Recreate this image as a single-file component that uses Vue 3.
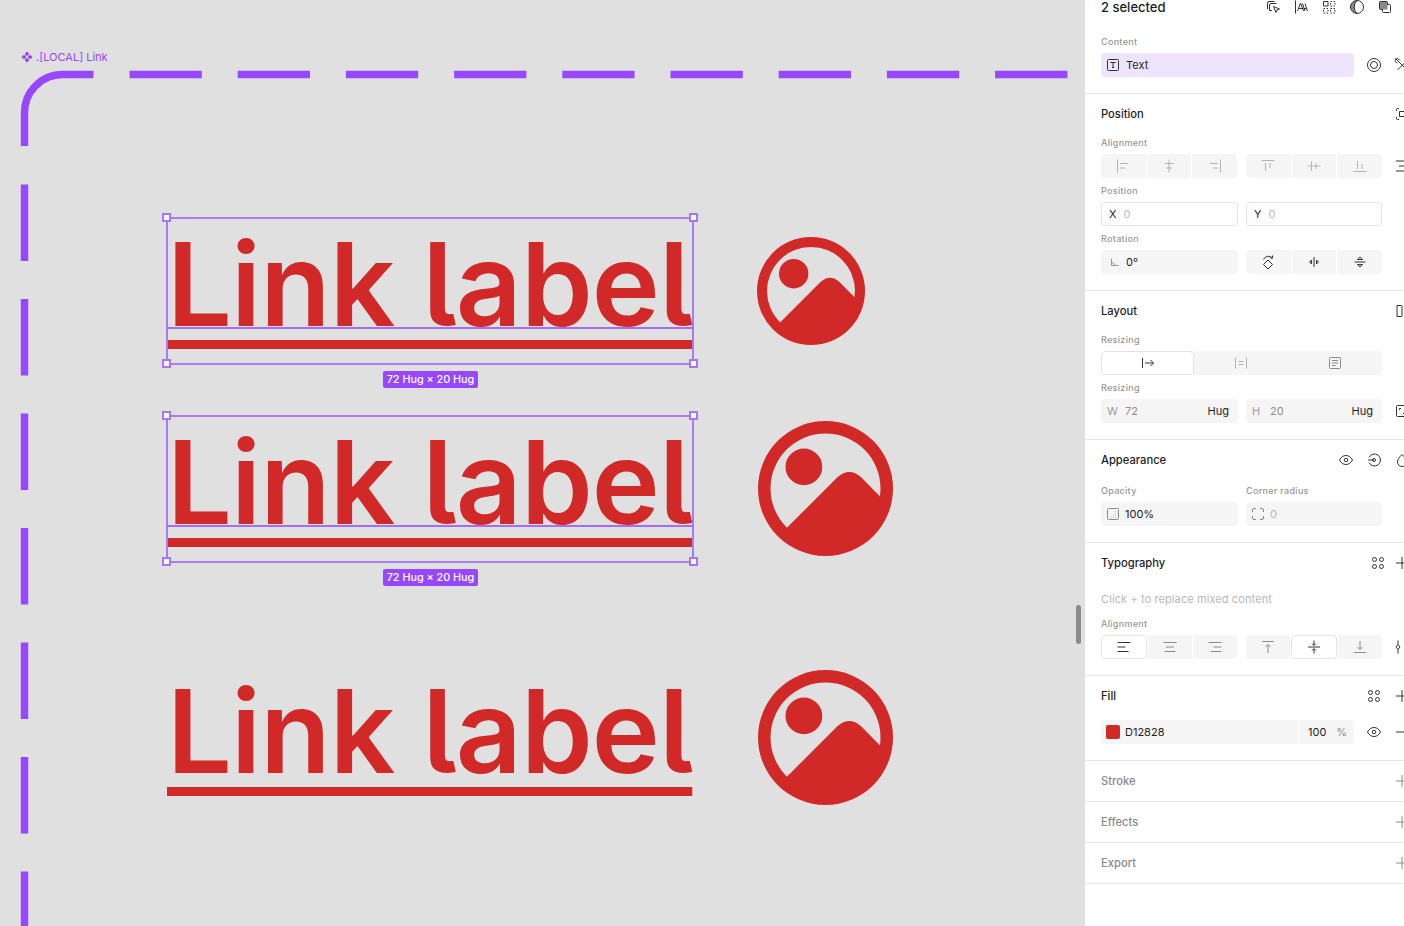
<template>
  <div class="app">
    <div class="canvas">
      <div class="frame-name">
        <svg viewBox="0 0 12 12" class="frame-ic"><path d="M6 .5 8.300 3 6 5.300 3.700 3ZM6 6.700 8.300 9 6 11.500 3.700 9ZM3 3.700 5.300 6 3 8.300.5 6ZM9 3.700 11.500 6 9 8.300 6.700 6Z" /></svg>
        <span>.[LOCAL] Link</span>
      </div>
      <svg class="dashes" viewBox="0 0 1085 926">
        <path class="dash-solid" d="M24.500 146V113a38 38 0 0 1 38-38.500H93.500" />
        <path class="dash-h" d="M129.500 74.500H1068" />
        <path class="dash-v" d="M24.500 184.500V926" />
      </svg>

      <div v-for="item in links" :key="item.cls" class="link" :class="item.cls">
        <span class="link-text">Link label</span>
        <template v-if="item.selected">
          <div class="sel"></div>
          <div class="baseline"></div>
          <i class="handle tl"></i><i class="handle tr"></i><i class="handle bl"></i><i class="handle br"></i>
          <div class="size-tag">72 Hug × 20 Hug</div>
        </template>
      </div>

      <svg v-for="pic in pics" :key="pic" class="pic" :class="pic" viewBox="0 0 108 108">
        <path fill-rule="evenodd" d="M54 0a54 54 0 1 0 0 108A54 54 0 0 0 54 0Zm0 10a44 44 0 1 1 0 88 44 44 0 0 1 0-88Z" />
        <circle cx="36.700" cy="36.700" r="14.700" />
        <path d="M22.500 86 63.500 45Q73 36.500 82.500 45L98 60.700 100 80 60 102 30 96Z" />
      </svg>

      <div class="scroll-thumb"></div>
    </div>

    <aside class="panel">
      <section class="sec">
        <div class="top-row">
          <span class="sel-count">2 selected</span>
          <div class="top-icons">
            <svg viewBox="0 0 16 16" class="ic dark"><path :d="p.pick" /></svg>
            <svg viewBox="0 0 16 16" class="ic dark"><path :d="p.type" /></svg>
            <svg viewBox="0 0 16 16" class="ic dark"><path d="M2.500 2.500h4.500v4.500H2.500Z" /><path class="dotted" d="M9.500 2.500h4.500v4.500H9.500ZM2.500 9.500h4.500v4.500H2.500ZM9.500 9.500h4.500v4.500H9.500Z" /></svg>
            <svg viewBox="0 0 16 16" class="ic dark"><path class="shade" d="M8 1.500a6.500 6.500 0 0 0 0 13A9 9 0 0 1 8 1.500Z" /><path :d="p.contrast" /></svg>
            <svg viewBox="0 0 16 16" class="ic dark"><path class="shade" d="M3.500 2.500h6a1 1 0 0 1 1 1v7h-7a1 1 0 0 1-1-1v-6a1 1 0 0 1 1-1Z" /><path :d="p.stack" /></svg>
            <svg viewBox="0 0 16 16" class="ic dark"><path d="M4 6l4 4 4-4" /></svg>
          </div>
        </div>
        <div class="lab lab-first">Content</div>
        <div class="row wide">
          <div class="field lilac">
            <svg viewBox="0 0 16 16" class="ic dark"><path :d="p.textBox" /></svg>
            <span class="val">Text</span>
          </div>
          <svg viewBox="0 0 16 16" class="ic dark"><path :d="p.target" /></svg>
          <svg viewBox="0 0 16 16" class="ic dark"><path :d="p.unlink" /></svg>
        </div>
      </section>

      <section class="sec">
        <div class="head"><h3>Position</h3><svg viewBox="0 0 16 16" class="ic dark"><path :d="p.frameSel" /></svg></div>
        <div class="lab">Alignment</div>
        <div class="row">
          <div class="seg">
            <span v-for="n in ['alL', 'alC', 'alR']" :key="n"><svg viewBox="0 0 16 16" class="ic off"><path :d="p[n]" /></svg></span>
          </div>
          <div class="seg">
            <span v-for="n in ['alT', 'alM', 'alB']" :key="n"><svg viewBox="0 0 16 16" class="ic off"><path :d="p[n]" /></svg></span>
          </div>
          <svg viewBox="0 0 16 16" class="ic dark trail"><path :d="p.distribute" /></svg>
        </div>
        <div class="lab">Position</div>
        <div class="row">
          <div class="field boxed"><b class="key">X</b><span class="ph">0</span></div>
          <div class="field boxed"><b class="key">Y</b><span class="ph">0</span></div>
        </div>
        <div class="lab">Rotation</div>
        <div class="row">
          <div class="field half">
            <svg viewBox="0 0 16 16" class="ic mid small"><path d="M4 4v8h8M4 8.500a3.500 3.500 0 0 1 3.500 3.500" /></svg>
            <span class="val">0°</span>
          </div>
          <div class="seg">
            <span v-for="n in ['rot', 'flipH', 'flipV']" :key="n"><svg viewBox="0 0 16 16" class="ic dark"><path :d="p[n]" /></svg></span>
          </div>
        </div>
      </section>

      <section class="sec">
        <div class="head"><h3>Layout</h3><svg viewBox="0 0 16 16" class="ic dark"><path :d="p.layout" /></svg></div>
        <div class="lab">Resizing</div>
        <div class="row">
          <div class="seg full">
            <span class="on"><svg viewBox="0 0 16 16" class="ic dark"><path d="M2.500 3v10M5 8h8.500M10.500 5l3 3-3 3" /></svg></span>
            <span><svg viewBox="0 0 16 16" class="ic off"><path d="M2.500 2.500v11M13.500 2.500v11M5.500 6.500h5M5.500 9.500h5" /></svg></span>
            <span><svg viewBox="0 0 16 16" class="ic mid"><path d="M3.500 2.500h9a1 1 0 0 1 1 1v9a1 1 0 0 1-1 1h-9a1 1 0 0 1-1-1v-9a1 1 0 0 1 1-1ZM5 5.500h6M5 8h6M5 10.500h3.500" /></svg></span>
          </div>
        </div>
        <div class="lab">Resizing</div>
        <div class="row">
          <div class="field half"><b class="key dim">W</b><span class="mutedval">72</span><span class="hug">Hug</span></div>
          <div class="field half"><b class="key dim">H</b><span class="mutedval">20</span><span class="hug">Hug</span></div>
          <svg viewBox="0 0 16 16" class="ic dark trail"><path d="M3.500 2.500h9a1 1 0 0 1 1 1v9a1 1 0 0 1-1 1h-9a1 1 0 0 1-1-1v-9a1 1 0 0 1 1-1ZM5.500 7V5.500H7M9 10.500h1.500V9" /></svg>
        </div>
      </section>

      <section class="sec">
        <div class="head">
          <h3>Appearance</h3>
          <div class="head-icons wide-gap">
            <svg viewBox="0 0 16 16" class="ic dark"><path :d="p.eye" /></svg>
            <svg viewBox="0 0 16 16" class="ic dark"><path :d="p.varTarget" /></svg>
            <svg viewBox="0 0 16 16" class="ic dark"><path d="M8 2.500C5.500 5 3.500 7.500 3.500 10a4.500 4.500 0 0 0 9 0C12.500 7.500 10.500 5 8 2.500Z" /></svg>
          </div>
        </div>
        <div class="split-labs">
          <div class="lab">Opacity</div>
          <div class="lab">Corner radius</div>
        </div>
        <div class="row">
          <div class="field half tight">
            <svg viewBox="0 0 16 16" class="ic mid"><path d="M3.500 2.500h9a1 1 0 0 1 1 1v9a1 1 0 0 1-1 1h-9a1 1 0 0 1-1-1v-9a1 1 0 0 1 1-1ZM6 11.500h.5M8 11.500h.5M10 11.500h.5M8 9.500h.5M10 9.500h.5M10 7.500h.5M10 5.500h.5" /></svg>
            <span class="val">100%</span>
          </div>
          <div class="field half tight">
            <svg viewBox="0 0 16 16" class="ic mid"><path d="M2.500 6V4a1.500 1.500 0 0 1 1.500-1.500h2M10 2.500h2A1.500 1.500 0 0 1 13.500 4v2M13.500 10v2a1.500 1.500 0 0 1-1.500 1.500h-2M6 13.500H4A1.500 1.500 0 0 1 2.500 12v-2" /></svg>
            <span class="ph">0</span>
          </div>
        </div>
      </section>

      <section class="sec">
        <div class="head">
          <h3>Typography</h3>
          <div class="head-icons">
            <svg viewBox="0 0 16 16" class="ic dark"><path :d="p.dots" /></svg>
            <svg viewBox="0 0 16 16" class="ic dark"><path :d="p.plus" /></svg>
          </div>
        </div>
        <div class="mixed">Click + to replace mixed content</div>
        <div class="lab lab-tight">Alignment</div>
        <div class="row">
          <div class="seg">
            <span class="on"><svg viewBox="0 0 16 16" class="ic dark"><path d="M1.500 3.500h13M1.500 8h8M1.500 12.500h11" /></svg></span>
            <span><svg viewBox="0 0 16 16" class="ic mid"><path d="M1.500 3.500h13M4 8h8M2.500 12.500h11" /></svg></span>
            <span><svg viewBox="0 0 16 16" class="ic mid"><path d="M1.500 3.500h13M6.500 8h8M3.500 12.500h11" /></svg></span>
          </div>
          <div class="seg">
            <span><svg viewBox="0 0 16 16" class="ic mid"><path d="M2 2.500h12M8 14V5.500M5.500 8 8 5.500 10.500 8" /></svg></span>
            <span class="on"><svg viewBox="0 0 16 16" class="ic dark"><path d="M2 8h12M8 1.500v4.500M6 4.500 8 6.500l2-2M8 14.500V10M6 11.500l2-2 2 2" /></svg></span>
            <span><svg viewBox="0 0 16 16" class="ic mid"><path d="M2 13.500h12M8 2v8.500M5.500 8 8 10.500 10.500 8" /></svg></span>
          </div>
          <svg viewBox="0 0 16 16" class="ic dark trail"><path d="M4 1.500V5.500M4 10.500V14.500M4 5.500 6 8 4 10.500 2 8ZM11 1.500V14.500" /></svg>
        </div>
      </section>

      <section class="sec">
        <div class="head">
          <h3>Fill</h3>
          <div class="head-icons wide-gap">
            <svg viewBox="0 0 16 16" class="ic dark"><path :d="p.dots" /></svg>
            <svg viewBox="0 0 16 16" class="ic dark"><path :d="p.plus" /></svg>
          </div>
        </div>
        <div class="row wide fill-row">
          <div class="fill-field">
            <div class="fill-hex"><i class="swatch"></i><span class="val">D12828</span></div>
            <div class="fill-pct"><span class="val">100</span><span class="pct">%</span></div>
          </div>
          <svg viewBox="0 0 16 16" class="ic dark"><path :d="p.eye" /></svg>
          <svg viewBox="0 0 16 16" class="ic dark"><path d="M2 8h12" /></svg>
        </div>
      </section>

      <section v-for="t in ['Stroke', 'Effects', 'Export']" :key="t" class="sec">
        <div class="head"><h3 class="muted">{{ t }}</h3><svg viewBox="0 0 16 16" class="ic mid"><path :d="p.plus" /></svg></div>
      </section>
    </aside>
  </div>
</template>

<script setup>
const circle = (x, y, r) => `M${x - r} ${y}a${r} ${r} 0 1 0 ${r * 2} 0a${r} ${r} 0 1 0 ${-r * 2} 0Z`;

const links = [
  { cls: "l1", selected: true },
  { cls: "l2", selected: true },
  { cls: "l3", selected: false },
];
const pics = ["pic1", "pic2", "pic3"];

const p = {
  pick: "M9.500 2.500H4A1.500 1.500 0 0 0 2.500 4v6M11.500 4.500H6A1.500 1.500 0 0 0 4.500 6v5.500H7M8.500 7.500l6 2.500-2.500 1-1 2.500Z",
  type: "M2.500 1.500v13M4.500 12 7.500 4l3 8M5.500 9.500h4M9.500 4.500l2.500 7.500M12 4.500l2.500 7.500M10.500 9.500h3",
  contrast: circle(8, 8, 6.5) + "M8 1.500A9 9 0 0 0 8 14.500",
  stack: "M3.500 2.500h6a1 1 0 0 1 1 1v2h2a1 1 0 0 1 1 1v6a1 1 0 0 1-1 1h-6a1 1 0 0 1-1-1v-2h-2a1 1 0 0 1-1-1v-6a1 1 0 0 1 1-1Z",
  textBox: "M3.500 2.500h9a1 1 0 0 1 1 1v9a1 1 0 0 1-1 1h-9a1 1 0 0 1-1-1v-9a1 1 0 0 1 1-1ZM5.500 6V5.500h5V6M8 5.500v5M7 10.500h2",
  target: circle(8, 8, 6.5) + circle(8, 8, 3.500),
  unlink: "M1.500 1.500 14.500 14.500M6 3.500 4.500 2a2 2 0 0 0-2.800 2.800L3.200 6.500M10 12.500l1.500 1.500a2 2 0 0 0 2.800-2.800L12.800 9.500M3.500 13l9-9",
  frameSel: "M5 2.500H3.500a1 1 0 0 0-1 1V5M2.500 11v1.500a1 1 0 0 0 1 1H5M11 2.500h1.500a1 1 0 0 1 1 1V5M13.500 11v1.500a1 1 0 0 1-1 1H11M5.500 5.500h5a1 1 0 0 1 1 1v3a1 1 0 0 1-1 1h-5Z",
  alL: "M2.500 1.500v13M5 5.500h8M5 10h5",
  alC: "M8 1.500v13M3.500 5.500h9M5 10h6",
  alR: "M13.500 1.500v13M3 5.500h8M6 10h5",
  alT: "M1.500 2.500h13M5.500 5v8M10 5v5",
  alM: "M1.500 8h13M5.500 3.500v9M10 5v6",
  alB: "M1.500 13.500h13M5.500 3v8M10 6v5",
  distribute: "M2 3h12M2 13h12M5 8h6",
  rot: "M8 6 12.500 10.500 8 15 3.500 10.500ZM3.500 5.500A5.500 5.500 0 0 1 12.500 4M12.500 1.500V4H10",
  flipH: "M8 3v10M5.500 6 3.500 8l2 2ZM10.500 6l2 2-2 2Z",
  flipV: "M2.500 8h11M5.500 5.500 8 3l2.500 2.500ZM5.500 10.500 8 13l2.500-2.500Z",
  layout: "M3 2.500h4a1 1 0 0 1 1 1v9a1 1 0 0 1-1 1H3ZM10 2.500h2M10 7.500h2",
  eye: "M1.500 8C3 5 5.300 3.500 8 3.500S13 5 14.500 8C13 11 10.700 12.500 8 12.500S3 11 1.500 8Z" + circle(8, 8, 1.800),
  varTarget: "M2 8h6" + "M3 5.500A6 6 0 1 1 3 10.500" + circle(8, 8, 1.500),
  dots: circle(4.500, 4.500, 2) + circle(11.500, 4.500, 2) + circle(4.500, 11.500, 2) + circle(11.500, 11.500, 2),
  plus: "M8 2v12M2 8h12",
};
</script>

<style scoped>
.app {
  display: flex;
  width: 1404px;
  height: 926px;
  overflow: hidden;
  font-family: Inter, "Liberation Sans", sans-serif;
}

.canvas {
  position: relative;
  flex: 0 0 1085px;
  height: 926px;
  background: #e0e0e0;
  overflow: hidden;
}

.frame-name {
  position: absolute;
  left: 21px;
  top: 50px;
  display: flex;
  align-items: center;
  gap: 3px;
  height: 14px;
  font-size: 11px;
  color: #9747ff;
}

.frame-ic {
  width: 12px;
  height: 12px;
  fill: #8f45ea;
}

.dashes {
  position: absolute;
  left: 0;
  top: 0;
  width: 1085px;
  height: 926px;
  fill: none;
  stroke: #9747ff;
  stroke-width: 7.400;
}

.dash-h {
  stroke-dasharray: 72.300 35.900;
}

.dash-v {
  stroke-dasharray: 76.500 38;
}

.link {
  position: absolute;
  left: 167px;
  width: 526px;
  height: 147px;
}

.l1 {
  top: 217px;
}

.l2 {
  top: 415px;
}

.l3 {
  top: 664px;
}

.link-text {
  display: block;
  font-size: 115px;
  font-weight: 600;
  line-height: 136px;
  letter-spacing: -0.900px;
  white-space: nowrap;
  color: #d12828;
  font-feature-settings: "cv05" 1;
  text-decoration: underline;
  text-decoration-thickness: 8.500px;
  text-underline-offset: 14px;
  text-decoration-skip-ink: none;
}

.sel {
  position: absolute;
  inset: 0 -1px -1px -1px;
  border: 2px solid #a67bf5;
  box-sizing: border-box;
}

.baseline {
  position: absolute;
  left: 0;
  right: 0;
  top: 110px;
  height: 2px;
  background: #a56cf5;
}

.handle {
  position: absolute;
  width: 9px;
  height: 9px;
  background: #fff;
  border: 2px solid #a974ff;
  box-sizing: border-box;
}

.tl {
  left: -5px;
  top: -4px;
}

.tr {
  right: -5px;
  top: -4px;
}

.bl {
  left: -5px;
  bottom: -4px;
}

.br {
  right: -5px;
  bottom: -4px;
}

.size-tag {
  position: absolute;
  left: 216px;
  top: 154px;
  width: 95px;
  height: 17px;
  border-radius: 2px;
  background: #9747ff;
  color: #fff;
  font-size: 10.800px;
  font-weight: 500;
  line-height: 18px;
  text-align: center;
  white-space: nowrap;
}

.pic {
  position: absolute;
  fill: #d12828;
}

.pic1 {
  left: 757px;
  top: 237px;
  width: 108px;
  height: 108px;
}

.pic2 {
  left: 758px;
  top: 421px;
  width: 135px;
  height: 135px;
}

.pic3 {
  left: 758px;
  top: 670px;
  width: 135px;
  height: 135px;
}

.scroll-thumb {
  position: absolute;
  left: 1076px;
  top: 605px;
  width: 5px;
  height: 39px;
  border-radius: 3px;
  background: #8c8c8c;
}

.panel {
  flex: 0 0 319px;
  height: 926px;
  background: #fff;
  overflow: hidden;
  color: #1e1e1e;
}

.sec {
  width: 325px;
  box-sizing: content-box;
  padding: 12px 0 12px 16px;
  border-bottom: 1px solid #e6e6e6;
}

.sec:first-child {
  padding-top: 0;
  padding-bottom: 16px;
  margin-top: -1px;
}

.sec:not(:first-child) {
  padding-bottom: 16px;
}

.sec:nth-last-child(-n + 3) {
  padding-bottom: 12px;
}

.top-row {
  display: flex;
  align-items: center;
  justify-content: space-between;
  width: 320px;
  height: 16px;
}

.sel-count {
  font-size: 13px;
  font-weight: 500;
}

.top-icons {
  display: flex;
  gap: 12px;
}

.head {
  display: flex;
  align-items: center;
  justify-content: space-between;
  width: 309px;
  height: 16px;
}

h3 {
  margin: 0;
  font-size: 11.200px;
  font-weight: 500;
  line-height: 16px;
}

h3.muted {
  color: #8a8a8a;
}

.head-icons {
  display: flex;
  gap: 8px;
}

.wide-gap {
  gap: 12px;
}

.lab {
  margin: 15px 0 5px;
  height: 12px;
  font-size: 9px;
  line-height: 12px;
  font-weight: 500;
  letter-spacing: 0.3px;
  color: #979797;
}

.lab-first {
  margin-top: 21px;
}

.sec > .lab-tight {
  margin-top: 11px;
}

.sec > .row + .lab {
  margin-top: 7px;
}

.split-labs {
  display: grid;
  grid-template-columns: 137px 136px;
  column-gap: 8px;
  margin-top: 17px;
}

.split-labs .lab {
  margin-top: 0;
}

.row {
  display: flex;
  align-items: center;
  gap: 8px;
  height: 24px;
}

.wide {
  gap: 12px;
}

.fill-row {
  margin-top: 16px;
}

.trail {
  margin-left: 4px;
}

.field {
  display: flex;
  align-items: center;
  box-sizing: border-box;
  height: 24px;
  border-radius: 4px;
  font-size: 11px;
}

.lilac {
  flex: 0 0 253px;
  gap: 5px;
  padding: 0 4px;
  background: #eee5fd;
}

.boxed {
  width: 136px;
  gap: 7px;
  padding: 0 7px;
  border: 1px solid #e3e3e3;
}

.boxed:first-child,
.half:first-child {
  width: 137px;
}

.half {
  width: 136px;
  gap: 4px;
  padding: 0 6px 0 6px;
  background: #f5f5f5;
}

.half.tight {
  padding-left: 4px;
}

.val {
  font-size: 11px;
  color: #1e1e1e;
}

.ph {
  color: #b8b8b8;
}

.key {
  font-weight: 400;
  color: #1e1e1e;
}

.key.dim {
  color: #9a9a9a;
  width: 14px;
}

.mutedval {
  color: #8f8f8f;
}

.hug {
  margin-left: auto;
  margin-right: 3px;
}

.seg {
  display: flex;
  gap: 1px;
  width: 136px;
  height: 24px;
  background: #fff;
  border-radius: 4px;
  overflow: hidden;
  flex: 0 0 auto;
}

.seg:first-child {
  margin-right: 1px;
}

.seg.full {
  width: 281px;
  gap: 0;
  margin-right: 0;
}

.seg.full span {
  flex: 0 0 94px;
}

.seg.full span.on {
  flex-basis: 93px;
}

.seg span {
  flex: 1;
  display: flex;
  align-items: center;
  justify-content: center;
  background: #f5f5f5;
}

.seg span.on {
  background: #fff;
  border: 1px solid #e3e3e3;
  border-radius: 4px;
  box-sizing: border-box;
}

.mixed {
  margin-top: 20px;
  height: 16px;
  font-size: 11px;
  line-height: 16px;
  letter-spacing: 0.1px;
  color: #b8b8b8;
}

.fill-field {
  display: flex;
  gap: 1px;
  flex: 0 0 253px;
  height: 24px;
  background: #fff;
  border-radius: 4px;
  overflow: hidden;
}

.fill-hex {
  display: flex;
  align-items: center;
  gap: 5px;
  width: 197px;
  padding-left: 5px;
  box-sizing: border-box;
  background: #f5f5f5;
}

.swatch {
  width: 14px;
  height: 14px;
  border-radius: 2px;
  background: #d12828;
}

.fill-pct {
  display: flex;
  align-items: center;
  justify-content: space-between;
  flex: 1;
  padding: 0 7px 0 9px;
  background: #f5f5f5;
}

.pct {
  font-size: 11px;
  color: #8f8f8f;
}

.ic {
  flex: 0 0 16px;
  width: 16px;
  height: 16px;
  fill: none;
  stroke-width: 1;
}

.small {
  width: 14px;
  height: 14px;
  flex-basis: 14px;
  margin-left: 1px;
}

.dark {
  stroke: #333;
}

.mid {
  stroke: #8a8a8a;
}

.off {
  stroke: #b3b3b3;
}

.shade {
  fill: #8a8a8a;
  stroke: none;
}

.dotted {
  stroke-dasharray: 1.500 1.500;
}
</style>

<style>
html,
body {
  margin: 0;
  background: #fff;
}
</style>
